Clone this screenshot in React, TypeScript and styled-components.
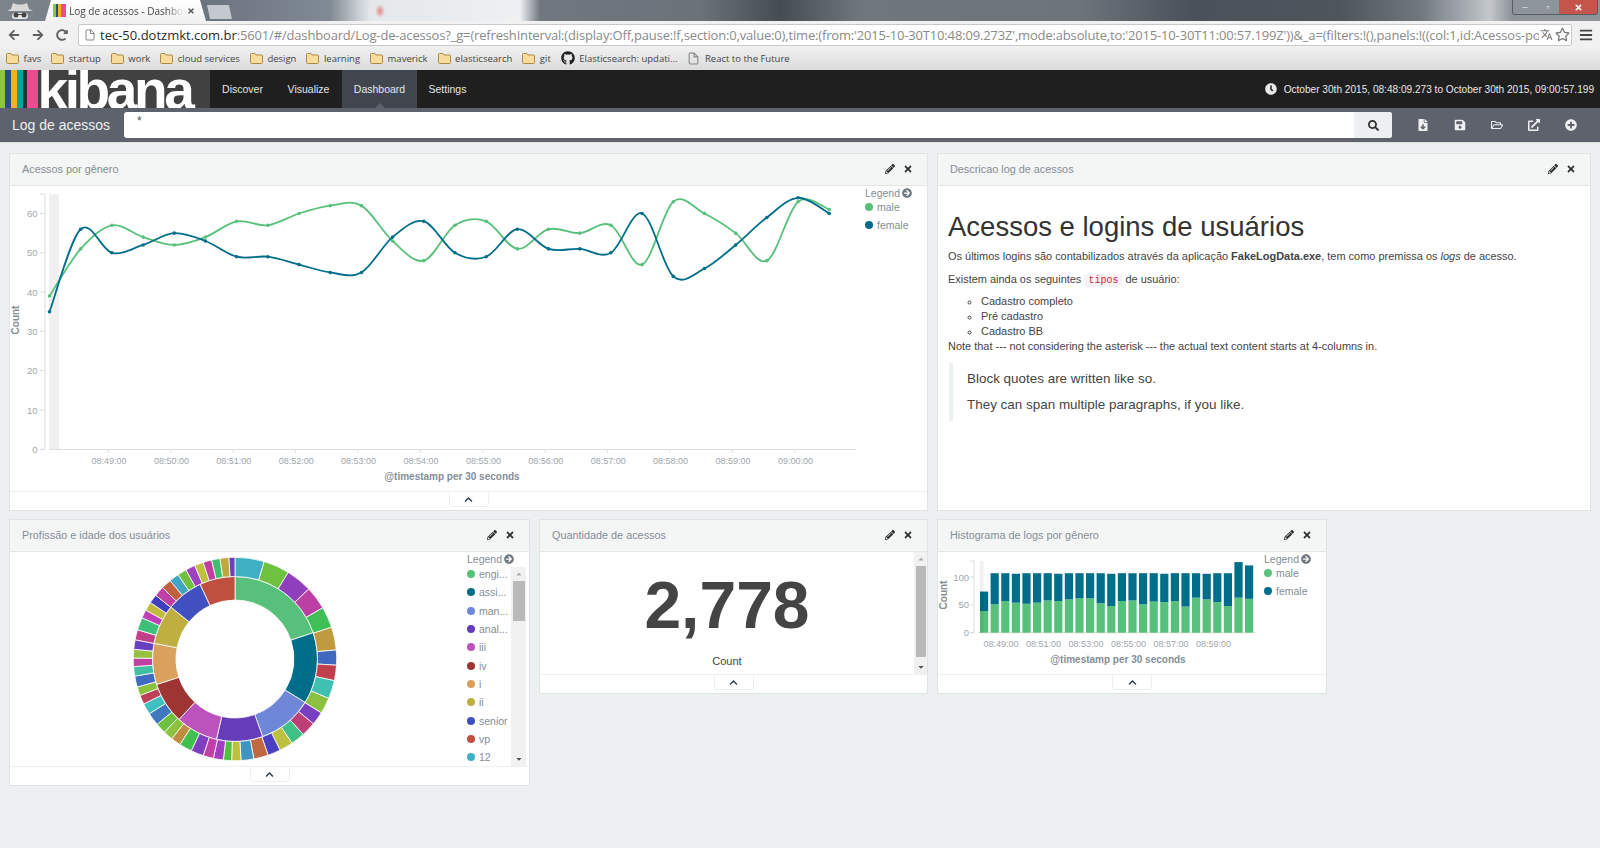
import React from "react";
import styled, { createGlobalStyle } from "styled-components";
import {
  FaArrowLeft, FaArrowRight, FaRedoAlt, FaRegStar, FaBars, FaGithub, FaClock, FaSearch,
  FaFileDownload, FaSave, FaRegFolderOpen, FaExternalLinkAlt, FaPlusCircle, FaPencilAlt,
  FaTimes, FaChevronUp, FaArrowCircleRight, FaCaretUp, FaCaretDown,
} from "react-icons/fa";
import { FiFile } from "react-icons/fi";
import { MdTranslate } from "react-icons/md";

const GREEN = "#57c17b";
const TEAL = "#006e8a";

const Global = createGlobalStyle`
  html, body { margin: 0; padding: 0; background: #ecf0f1; height: 100%; overflow: hidden; }
  body { font-family: "Liberation Sans", Arial, sans-serif; color: #444; }
  * { box-sizing: border-box; }
`;

const Page = styled.div`
  width: 1600px;
  height: 848px;
  overflow: hidden;
  display: flex;
  flex-direction: column;
  background: #ecf0f1;
`;

/* ---------- browser chrome ---------- */
const TabStrip = styled.div`
  height: 21px;
  display: flex;
  align-items: flex-end;
  background:
    radial-gradient(ellipse 5px 7px at 380px 11px, rgba(226, 120, 120, 0.85), transparent),
    linear-gradient(90deg, #7d848b 0, #6c7480 210px, #808a94 330px, #e4e8ea 370px, #eef0f2 520px,
    #6f7880 540px, #6a727a 700px, #444c54 780px, #6e767e 860px, #6c747c 1080px, #49515a 1190px, #4d555d 1340px,
    #6f777f 1420px, #c4c8cb 1490px, #8d9399 1512px);
`;
const Incognito = styled.div`
  width: 45px;
  height: 21px;
  padding-left: 6px;
  display: flex;
  align-items: center;
`;
const ActiveTab = styled.div`
  width: 161px;
  height: 21px;
  padding: 0 10px 0 8px;
  margin-right: 1px;
  display: flex;
  align-items: center;
  background: linear-gradient(#fff, #f2f2f2);
  clip-path: polygon(0 100%, 6px 0, 155px 0, 161px 100%);
  font: 10px "Open Sans", "Liberation Sans", sans-serif;
  color: #444;
`;
const FaviconBars = styled.span`
  width: 13px;
  height: 13px;
  margin-right: 3px;
  flex: none;
  background: linear-gradient(90deg, #8cc63f 0 25%, #2d4a8a 25% 40%, #f5b31a 40% 65%, #ee4a8f 65% 100%);
`;
const TabTitle = styled.span`
  width: 115px;
  overflow: hidden;
  white-space: nowrap;
  -webkit-mask-image: linear-gradient(90deg, #000 85%, transparent);
  mask-image: linear-gradient(90deg, #000 85%, transparent);
`;
const TabClose = styled.span`
  margin-left: 3px;
  display: flex;
  color: #555;
  font-size: 8px;
`;
const NewTab = styled.div`
  width: 25px;
  height: 14px;
  margin-bottom: 2px;
  background: #c3c9cf;
  clip-path: polygon(0 0, 88% 0, 100% 100%, 12% 100%);
`;
const WindowControls = styled.div`
  margin-left: auto;
  margin-right: 2px;
  align-self: flex-start;
  height: 15px;
  display: flex;
  border: 1px solid #565c62;
  border-top: 0;
  border-radius: 0 0 3px 3px;
  overflow: hidden;
`;
const WinButton = styled.div<{ $w: number; $bg: string }>`
  width: ${(p) => p.$w}px;
  background: ${(p) => p.$bg};
  display: flex;
  align-items: center;
  justify-content: center;
  color: #eee;
  font-size: 9px;
`;

const AddressRow = styled.div`
  height: 27px;
  display: flex;
  align-items: center;
  padding-left: 2px;
  background: #f1f1f1;
`;
const NavArrow = styled.div`
  width: 24px;
  display: flex;
  justify-content: center;
  color: #5f5f5f;
  font-size: 12px;
`;
const UrlBox = styled.div`
  width: 1494px;
  height: 22px;
  margin-left: 4px;
  padding: 0 1px 0 5px;
  display: flex;
  align-items: center;
  background: #fff;
  border: 1px solid #c9c9c9;
  border-radius: 2px;
`;
const UrlDoc = styled.span`
  display: flex;
  margin-right: 4px;
  color: #888;
  font-size: 12px;
  flex: none;
`;
const UrlText = styled.div`
  flex: 1;
  overflow: hidden;
  white-space: nowrap;
  font: 13px "Open Sans", "Liberation Sans", sans-serif;
  color: #8a8a8a;
  letter-spacing: -0.17px;
  & b { font-weight: 400; color: #2b2b2b; letter-spacing: 0; }
`;
const UrlIcon = styled.span<{ $ml: number; $size: number }>`
  display: flex;
  flex: none;
  margin-left: ${(p) => p.$ml}px;
  color: #777;
  font-size: ${(p) => p.$size}px;
`;
const MenuIcon = styled.div`
  margin-left: 7px;
  display: flex;
  color: #444;
  font-size: 14px;
`;

const Bookmarks = styled.div`
  height: 22px;
  display: flex;
  align-items: center;
  padding: 0 0 2px 6px;
  gap: 10px;
  background: linear-gradient(#efefef, #dcdcdc);
  font: 9.5px "Open Sans", "Liberation Sans", sans-serif;
  color: #444;
`;
const Bookmark = styled.div`
  display: flex;
  align-items: center;
  gap: 4.5px;
  white-space: nowrap;
`;

const Folder = () => (
  <svg width="13" height="11" viewBox="0 0 13 11">
    <path d="M.5 2V9.5a1 1 0 0 0 1 1h10a1 1 0 0 0 1-1V3a1 1 0 0 0-1-1H6L5 .5H1.5a1 1 0 0 0-1 1z" fill="#f7dc9c" stroke="#a98a4a" />
  </svg>
);

const IncognitoIcon = () => (
  <svg width="28" height="18" viewBox="0 0 28 18">
    <path d="M1 9h26l-4-2-2-6-4 1.5h-6L7 1 5 7z" fill="#d8d8d8" />
    <rect x="6" y="11" width="16" height="6" rx="3" fill="#e8e8e8" />
    <circle cx="10" cy="13" r="2.5" fill="#444" />
    <circle cx="18" cy="13" r="2.5" fill="#444" />
    <rect x="11" y="12" width="6" height="1" fill="#444" />
  </svg>
);

/* ---------- kibana navigation ---------- */
const TopNav = styled.div`
  height: 38px;
  display: flex;
  background: #1f1f1f;
`;
const Logo = styled.div`
  width: 210px;
  height: 38px;
  display: flex;
  overflow: hidden;
  background: #414141;
`;
const LogoBar = styled.span<{ $w: number; $c: string }>`
  width: ${(p) => p.$w}px;
  flex: none;
  background: ${(p) => p.$c};
`;
const LogoWord = styled.span`
  font: 700 55px/38px "Liberation Sans", Arial, sans-serif;
  letter-spacing: -3.4px;
  color: #fff;
  transform: translateY(1px);
`;
const NavItem = styled.div<{ $active?: boolean; $w: number }>`
  position: relative;
  width: ${(p) => p.$w}px;
  display: flex;
  align-items: center;
  justify-content: center;
  font-size: 10.5px;
  color: #e4e6e8;
  background: ${(p) => (p.$active ? "#41464e" : "transparent")};
  ${(p) =>
    p.$active &&
    `&::after {
      content: "";
      position: absolute;
      left: 50%;
      bottom: 0;
      margin-left: -5px;
      border: 5px solid transparent;
      border-top: 0;
      border-bottom-color: #5d626c;
    }`}
`;
const TimeRange = styled.div`
  margin-left: auto;
  padding-right: 6px;
  display: flex;
  align-items: center;
  gap: 7px;
  font-size: 10.1px;
  color: #e8e8e8;
  white-space: nowrap;
`;
const LocalNav = styled.div`
  height: 35px;
  display: flex;
  align-items: center;
  background: #5d626c;
  border-bottom: 1px solid #dfe3e4;
`;
const LocalTitle = styled.div`
  width: 124px;
  padding-left: 12px;
  font-size: 14px;
  color: #eef0f1;
  white-space: nowrap;
`;
const QueryForm = styled.div`
  width: 1268px;
  height: 26px;
  display: flex;
  border-radius: 3px;
  overflow: hidden;
  background: #fff;
`;
const QueryInput = styled.div`
  flex: 1;
  padding: 2px 0 0 13px;
  font-size: 12px;
  color: #555;
`;
const QueryButton = styled.div`
  width: 38px;
  display: flex;
  align-items: center;
  justify-content: center;
  background: #ecf0f1;
  color: #2d2d2d;
  font-size: 11px;
`;
const LocalActions = styled.div`
  margin-left: 12px;
  display: flex;
`;
const LocalAction = styled.div`
  width: 37px;
  display: flex;
  justify-content: center;
  color: #eef0f2;
  font-size: 12px;
`;

/* ---------- panels ---------- */
const Grid = styled.div`
  padding: 10px 9px 0;
  display: flex;
  flex-direction: column;
  gap: 8px;
`;
const Row = styled.div`
  display: flex;
  align-items: flex-start;
  gap: 9px;
`;
const Panel = styled.section<{ $w: number; $h: number }>`
  width: ${(p) => p.$w}px;
  height: ${(p) => p.$h}px;
  display: flex;
  flex-direction: column;
  background: #fff;
  border: 1px solid #e1e4e5;
  overflow: hidden;
`;
const PanelHead = styled.header`
  height: 32px;
  flex: none;
  padding: 0 14px 2px 12px;
  display: flex;
  align-items: center;
  justify-content: space-between;
  background: #f4f5f5;
  border-bottom: 1px solid #e3e5e6;
`;
const PanelTitle = styled.span`
  font-size: 10.85px;
  color: #848e96;
`;
const PanelTools = styled.span`
  display: flex;
  align-items: center;
  gap: 8px;
  color: #2f2f2f;
  font-size: 10px;
`;
const PanelBody = styled.div`
  flex: 1;
  min-height: 0;
  display: flex;
`;
const PanelFoot = styled.footer`
  height: 19px;
  flex: none;
  display: flex;
  justify-content: center;
  border-top: 1px solid #eef0f0;
`;
const ResizeTab = styled.div`
  width: 40px;
  height: 15px;
  display: flex;
  align-items: center;
  justify-content: center;
  border: 1px solid #eef0f0;
  border-top: 0;
  border-radius: 0 0 4px 4px;
  color: #2f3a44;
  font-size: 9px;
`;

const Legend = styled.div<{ $ml: number }>`
  margin-left: ${(p) => p.$ml}px;
  flex: none;
  font-size: 10.5px;
  color: #848e96;
`;
const LegendTitle = styled.div`
  height: 12px;
  margin-top: 1px;
  line-height: 12px;
  display: flex;
  align-items: center;
  gap: 2px;
  & svg { color: #6f7780; font-size: 10px; }
`;
const LegendRow = styled.div`
  display: flex;
  align-items: flex-start;
`;
const LegendList = styled.ul`
  width: 44px;
  margin: 0;
  padding: 0;
  list-style: none;
  overflow: hidden;
`;
const LegendLoose = styled.ul`
  margin: -1px 0 0;
  padding: 0;
  list-style: none;
`;
const LegendItem = styled.li`
  height: 18.3px;
  display: flex;
  align-items: center;
  gap: 4px;
  white-space: nowrap;
`;
const Dot = styled.span<{ $c: string }>`
  width: 8px;
  height: 8px;
  flex: none;
  border-radius: 50%;
  background: ${(p) => p.$c};
`;
const Track = styled.div<{ $w: number; $h: number; $mt: number }>`
  width: ${(p) => p.$w}px;
  height: ${(p) => p.$h}px;
  margin-top: ${(p) => p.$mt}px;
  flex: none;
  display: flex;
  flex-direction: column;
  align-items: center;
  background: #f1f1f1;
  color: #555;
  font-size: 8px;
`;
const TrackArrow = styled.div<{ $muted?: boolean }>`
  height: 14px;
  flex: none;
  display: flex;
  align-items: center;
  color: ${(p) => (p.$muted ? "#a8a8a8" : "#505050")};
`;
const Thumb = styled.div<{ $h: number }>`
  width: calc(100% - 3px);
  height: ${(p) => p.$h}px;
  flex: none;
  background: #b9b9b9;
`;
const TrackGap = styled.div`
  flex: 1;
`;

const Metric = styled.div`
  flex: 1;
  display: flex;
  flex-direction: column;
  align-items: center;
`;
const MetricValue = styled.div`
  margin-top: 13px;
  font: 700 66px/80px "Liberation Sans", Arial, sans-serif;
  color: #444;
`;
const MetricLabel = styled.div`
  margin-top: 10px;
  font-size: 11px;
  color: #444;
`;

const Markdown = styled.div`
  padding: 24px 10px 0;
  font-size: 10.96px;
  line-height: 15px;
  color: #444;
  & h1 {
    margin: 0 0 6px;
    font-size: 27.5px;
    line-height: 33px;
    font-weight: 400;
    color: #333;
  }
  & > p { margin: 0 0 7.5px; }
  & ul { margin: 0; padding-left: 33px; list-style: circle; }
  & code {
    padding: 1px 4px;
    border-radius: 3px;
    background: #f9f2f4;
    color: #c7254e;
    font: 10px "Liberation Mono", monospace;
  }
`;
const Quote = styled.blockquote`
  margin: 9px 0 0 1px;
  padding: 6px 0 6px 14px;
  border-left: 4px solid #ecf0f1;
  font-size: 13.45px;
  line-height: 20px;
  & p { margin: 0 0 6px; }
  & p:last-child { margin: 0; }
`;

/* ---------- chart data ---------- */
const male = [39, 51, 57, 54, 52, 54, 58, 57, 60, 62, 62, 53, 48, 57, 58, 51, 56, 55, 57, 47, 63, 60, 55, 48, 63, 61];
const female = [35, 56, 50, 52, 55, 53, 49, 49, 47, 45, 45, 54, 58, 50, 49, 56, 51, 51, 50, 60, 44, 46, 52, 59, 64, 60];

type P = [number, number];
const smooth = (pts: P[]) => {
  let d = `M${pts[0][0]} ${pts[0][1]}`;
  for (let i = 0; i < pts.length - 1; i++) {
    const a = pts[i - 1] || pts[i];
    const b = pts[i];
    const c = pts[i + 1];
    const e = pts[i + 2] || c;
    d += `C${b[0] + (c[0] - a[0]) / 6} ${b[1] + (c[1] - a[1]) / 6} ${c[0] - (e[0] - b[0]) / 6} ${c[1] - (e[1] - b[1]) / 6} ${c[0]} ${c[1]}`;
  }
  return d;
};
const lineX = (i: number) => 49.5 + 31.19 * i;
const lineY = (v: number) => 449.3 - 3.93 * v;

const LineSeries = ({ data, color }: { data: number[]; color: string }) => {
  const pts = data.map((v, i) => [lineX(i), lineY(v)] as P);
  return (
    <g>
      <path d={smooth(pts)} fill="none" stroke={color} strokeWidth={1.8} />
      {pts.map((p, i) => (
        <circle key={i} cx={p[0]} cy={p[1]} r={1.8} fill={color} />
      ))}
    </g>
  );
};

const tickStyle = { fontSize: 9, fill: "#a0a7ad", fontFamily: "'Liberation Sans', sans-serif" };
const axisTitle = { fontSize: 10, fontWeight: 700, fill: "#848e96", fontFamily: "'Liberation Sans', sans-serif" };
const fmt = (m: number) => (m >= 60 ? `09:${String(m - 60).padStart(2, "0")}:00` : `08:${m}:00`);

const LineChart = () => (
  <svg width="846" height="305" viewBox="10 186 846 305">
    <rect x="49" y="194" width="10" height="255" fill="#f0f0f0" />
    <path d="M40 194H45V449.5H40M49 449.5H856" fill="none" stroke="#ddd" />
    {[0, 10, 20, 30, 40, 50, 60].map((v) => (
      <g key={v}>
        <path d={`M40 ${lineY(v)}H45`} stroke="#ddd" />
        <text x={37.5} y={lineY(v) + 3.5} textAnchor="end" style={{ ...tickStyle, fontSize: 9.5 }}>{v}</text>
      </g>
    ))}
    {Array.from({ length: 12 }).map((_, k) => {
      const x = 108.3 + 62.4 * k;
      return (
        <g key={k}>
          <path d={`M${x} 449V453`} stroke="#ddd" />
          <text x={x + 0.7} y={464} textAnchor="middle" style={tickStyle}>{fmt(49 + k)}</text>
        </g>
      );
    })}
    <text x={452} y={479.5} textAnchor="middle" style={axisTitle}>@timestamp per 30 seconds</text>
    <text transform="translate(18.5 320) rotate(-90)" textAnchor="middle" style={axisTitle}>Count</text>
    <LineSeries data={male} color={GREEN} />
    <LineSeries data={female} color={TEAL} />
  </svg>
);

const BarChart = () => {
  const h = (v: number) => v * 0.556;
  return (
    <svg width="320" height="122" viewBox="938 552 320 122">
      <path d="M970 561H974V632.7H970M978 632.7H1256" fill="none" stroke="#ddd" />
      {[0, 50, 100].map((v) => (
        <g key={v}>
          <path d={`M970 ${632.7 - h(v)}H974`} stroke="#ddd" />
          <text x={971} y={632.7 - h(v) + 3.5} textAnchor="end" style={{ ...tickStyle, fontSize: 9.5 }} dx={-2}>{v}</text>
        </g>
      ))}
      {male.map((m, i) => {
        const x = 980 + 10.6 * i;
        return (
          <g key={i}>
            <rect x={x} y={632.7 - h(m)} width={8.2} height={h(m)} fill={GREEN} />
            <rect x={x} y={632.7 - h(m + female[i])} width={8.2} height={h(female[i])} fill={TEAL} />
          </g>
        );
      })}
      <rect x="980" y="561" width="3.5" height="72" fill="#000" opacity="0.06" />
      {[0, 1, 2, 3, 4, 5].map((k) => (
        <text key={k} x={1001 + 42.5 * k} y={647} textAnchor="middle" style={tickStyle}>{fmt(49 + 2 * k)}</text>
      ))}
      <text x={1118} y={662.5} textAnchor="middle" style={axisTitle}>@timestamp per 30 seconds</text>
      <text transform="translate(947 595) rotate(-90)" textAnchor="middle" style={axisTitle}>Count</text>
    </svg>
  );
};

const inner: [number, string][] = [
  [71.4, "#57c17b"], [121.8, "#006e8a"], [160.4, "#6f87d8"], [193, "#663db8"], [222.8, "#bc52bc"],
  [252, "#9e3533"], [281, "#daa05d"], [309, "#bfaf40"], [335, "#4150c0"], [360, "#bf4f3f"],
];
const outer: [number, string][] = [
  [16.7, "#3fb0c4"], [31.6, "#6fc23f"], [46.5, "#8f3ebc"], [59.7, "#bc3fa4"], [71.8, "#3fc056"], [84.9, "#c09a3f"],
  [93.5, "#3f68bf"], [102.3, "#bf3f4a"], [112.8, "#3fc0b0"], [122, "#8cc03f"], [129.6, "#7a3fc0"], [137.9, "#bc3f78"],
  [145.9, "#3fc085"], [153.7, "#bcc03f"], [161, "#4a3fc0"], [169.3, "#c0683f"], [176.6, "#3f95c0"], [181.9, "#c0c03f"],
  [186.6, "#4fc03f"], [192.3, "#a03fc0"], [198.2, "#c03fa8"], [205.5, "#7f3fc0"], [212.8, "#3fc04f"], [218.4, "#c08c3f"],
  [224, "#8cc03f"], [230, "#6fc03f"], [237.4, "#3f78bf"], [243.8, "#3fc0c0"], [249, "#bf3f5a"], [254, "#8cc03f"],
  [260.3, "#3f6bc0"], [265.7, "#3fc0a5"], [270.5, "#c03fa0"], [275.5, "#96c03f"], [280.9, "#683fc0"], [286.7, "#c03f88"],
  [293.9, "#3fc078"], [298.7, "#c03fb8"], [303.7, "#c0bb3f"], [308.8, "#3f3fc0"], [314.6, "#c03fa5"], [320.4, "#c0603f"],
  [326, "#3fa5c0"], [331.2, "#70c03f"], [336.7, "#a03fc0"], [341.8, "#c0c03f"], [346.7, "#c03fa0"], [351.5, "#3fc070"],
  [356.6, "#c0a83f"], [360, "#6a3fc0"],
];
const CX = 235;
const CY = 659;
const pol = (r: number, deg: number) => {
  const t = (deg * Math.PI) / 180;
  return `${(CX + r * Math.sin(t)).toFixed(2)} ${(CY - r * Math.cos(t)).toFixed(2)}`;
};
const wedge = (r0: number, r1: number, a: number, b: number) =>
  `M${pol(r0, a)}L${pol(r1, a)}A${r1} ${r1} 0 0 1 ${pol(r1, b)}L${pol(r0, b)}A${r0} ${r0} 0 0 0 ${pol(r0, a)}Z`;

const Ring = ({ items, r0, r1 }: { items: [number, string][]; r0: number; r1: number }) => (
  <g>
    {items.map(([end, c], i) => (
      <path key={i} d={wedge(r0, r1, i ? items[i - 1][0] : 0, end)} fill={c} stroke="#fff" strokeWidth={0.8} />
    ))}
  </g>
);

const Donut = () => (
  <svg width="450" height="214" viewBox="10 552 450 214">
    <Ring items={inner} r0={59} r1={82.5} />
    <Ring items={outer} r0={82.5} r1={101.7} />
  </svg>
);

const profLegend: [string, string][] = [
  ["engi...", "#57c17b"], ["assi...", "#006e8a"], ["man...", "#6f87d8"], ["anal...", "#663db8"],
  ["iii", "#bc52bc"], ["iv", "#9e3533"], ["i", "#daa05d"], ["ii", "#bfaf40"],
  ["senior", "#4150c0"], ["vp", "#bf4f3f"], ["12", "#3fb0c4"],
];

const Tools = () => (
  <PanelTools>
    <FaPencilAlt />
    <FaTimes />
  </PanelTools>
);
const Foot = () => (
  <PanelFoot>
    <ResizeTab>
      <FaChevronUp />
    </ResizeTab>
  </PanelFoot>
);
const LegendHead = () => (
  <LegendTitle>
    Legend <FaArrowCircleRight />
  </LegendTitle>
);
const GenderLegend = ({ ml }: { ml: number }) => (
  <Legend $ml={ml}>
    <LegendHead />
    <LegendLoose>
      <LegendItem><Dot $c={GREEN} />male</LegendItem>
      <LegendItem><Dot $c={TEAL} />female</LegendItem>
    </LegendLoose>
  </Legend>
);

const bookmarks = ["favs", "startup", "work", "cloud services", "design", "learning", "maverick", "elasticsearch", "git"];

export default function App() {
  return (
    <Page>
      <Global />
      <TabStrip>
        <Incognito><IncognitoIcon /></Incognito>
        <ActiveTab>
          <FaviconBars />
          <TabTitle>Log de acessos - Dashboard</TabTitle>
          <TabClose><FaTimes /></TabClose>
        </ActiveTab>
        <NewTab />
        <WindowControls>
          <WinButton $w={24} $bg="#8d949b">–</WinButton>
          <WinButton $w={22} $bg="#8d949b">▫</WinButton>
          <WinButton $w={38} $bg="#c5544a"><FaTimes /></WinButton>
        </WindowControls>
      </TabStrip>
      <AddressRow>
        <NavArrow><FaArrowLeft /></NavArrow>
        <NavArrow><FaArrowRight /></NavArrow>
        <NavArrow><FaRedoAlt /></NavArrow>
        <UrlBox>
          <UrlDoc><FiFile /></UrlDoc>
          <UrlText>
            <b>tec-50.dotzmkt.com.br</b>:5601/#/dashboard/Log-de-acessos?_g=(refreshInterval:(display:Off,pause:!f,section:0,value:0),time:(from:'2015-10-30T10:48:09.273Z',mode:absolute,to:'2015-10-30T11:00:57.199Z'))&amp;_a=(filters:!(),panels:!((col:1,id:Acessos-po
          </UrlText>
          <UrlIcon $ml={1} $size={13}><MdTranslate /></UrlIcon>
          <UrlIcon $ml={2} $size={15}><FaRegStar /></UrlIcon>
        </UrlBox>
        <MenuIcon><FaBars /></MenuIcon>
      </AddressRow>
      <Bookmarks>
        {bookmarks.map((b) => (
          <Bookmark key={b}><Folder />{b}</Bookmark>
        ))}
        <Bookmark><FaGithub size={14} color="#222" />Elasticsearch: updati...</Bookmark>
        <Bookmark><FiFile size={13} color="#888" />React to the Future</Bookmark>
      </Bookmarks>

      <TopNav>
        <Logo>
          <LogoBar $w={5} $c="#8cc63f" />
          <LogoBar $w={5.5} $c="#2d4a8a" />
          <LogoBar $w={6.5} $c="#f5b31a" />
          <LogoBar $w={6} $c="#00a69c" />
          <LogoBar $w={4} $c="#2f2f2f" />
          <LogoBar $w={10.5} $c="#ee4a8f" />
          <LogoWord>kibana</LogoWord>
        </Logo>
        <NavItem $w={65}>Discover</NavItem>
        <NavItem $w={67}>Visualize</NavItem>
        <NavItem $w={75} $active>Dashboard</NavItem>
        <NavItem $w={61}>Settings</NavItem>
        <TimeRange>
          <FaClock size={12} />
          October 30th 2015, 08:48:09.273 to October 30th 2015, 09:00:57.199
        </TimeRange>
      </TopNav>
      <LocalNav>
        <LocalTitle>Log de acessos</LocalTitle>
        <QueryForm>
          <QueryInput>*</QueryInput>
          <QueryButton><FaSearch /></QueryButton>
        </QueryForm>
        <LocalActions>
          <LocalAction><FaFileDownload /></LocalAction>
          <LocalAction><FaSave /></LocalAction>
          <LocalAction><FaRegFolderOpen /></LocalAction>
          <LocalAction><FaExternalLinkAlt /></LocalAction>
          <LocalAction><FaPlusCircle /></LocalAction>
        </LocalActions>
      </LocalNav>

      <Grid>
        <Row>
          <Panel $w={919} $h={358}>
            <PanelHead><PanelTitle>Acessos por gênero</PanelTitle><Tools /></PanelHead>
            <PanelBody>
              <LineChart />
              <GenderLegend ml={9} />
            </PanelBody>
            <Foot />
          </Panel>
          <Panel $w={654} $h={358}>
            <PanelHead><PanelTitle>Descricao log de acessos</PanelTitle><Tools /></PanelHead>
            <PanelBody>
              <Markdown>
                <h1>Acessos e logins de usuários</h1>
                <p>Os últimos logins são contabilizados através da aplicação <strong>FakeLogData.exe</strong>, tem como premissa os <em>logs</em> de acesso.</p>
                <p>Existem ainda os seguintes <code>tipos</code> de usuário:</p>
                <ul>
                  <li>Cadastro completo</li>
                  <li>Pré cadastro</li>
                  <li>Cadastro BB</li>
                </ul>
                Note that --- not considering the asterisk --- the actual text content starts at 4-columns in.
                <Quote>
                  <p>Block quotes are written like so.</p>
                  <p>They can span multiple paragraphs, if you like.</p>
                </Quote>
              </Markdown>
            </PanelBody>
          </Panel>
        </Row>
        <Row>
          <Panel $w={521} $h={267}>
            <PanelHead><PanelTitle>Profissão e idade dos usuários</PanelTitle><Tools /></PanelHead>
            <PanelBody>
              <Donut />
              <Legend $ml={7}>
                <LegendHead />
                <LegendRow>
                  <LegendList>
                    {profLegend.map(([t, c]) => (
                      <LegendItem key={t}><Dot $c={c} />{t}</LegendItem>
                    ))}
                  </LegendList>
                  <Track $w={15} $h={199} $mt={2}>
                    <TrackArrow $muted><FaCaretUp /></TrackArrow>
                    <Thumb $h={40} />
                    <TrackGap />
                    <TrackArrow><FaCaretDown /></TrackArrow>
                  </Track>
                </LegendRow>
              </Legend>
            </PanelBody>
            <Foot />
          </Panel>
          <Panel $w={389} $h={175}>
            <PanelHead><PanelTitle>Quantidade de acessos</PanelTitle><Tools /></PanelHead>
            <PanelBody>
              <Metric>
                <MetricValue>2,778</MetricValue>
                <MetricLabel>Count</MetricLabel>
              </Metric>
              <Track $w={13} $h={122} $mt={0}>
                <TrackArrow $muted><FaCaretUp /></TrackArrow>
                <Thumb $h={91} />
                <TrackGap />
                <TrackArrow><FaCaretDown /></TrackArrow>
              </Track>
            </PanelBody>
            <Foot />
          </Panel>
          <Panel $w={390} $h={175}>
            <PanelHead><PanelTitle>Histograma de logs por gênero</PanelTitle><Tools /></PanelHead>
            <PanelBody>
              <BarChart />
              <GenderLegend ml={6} />
            </PanelBody>
            <Foot />
          </Panel>
        </Row>
      </Grid>
    </Page>
  );
}
